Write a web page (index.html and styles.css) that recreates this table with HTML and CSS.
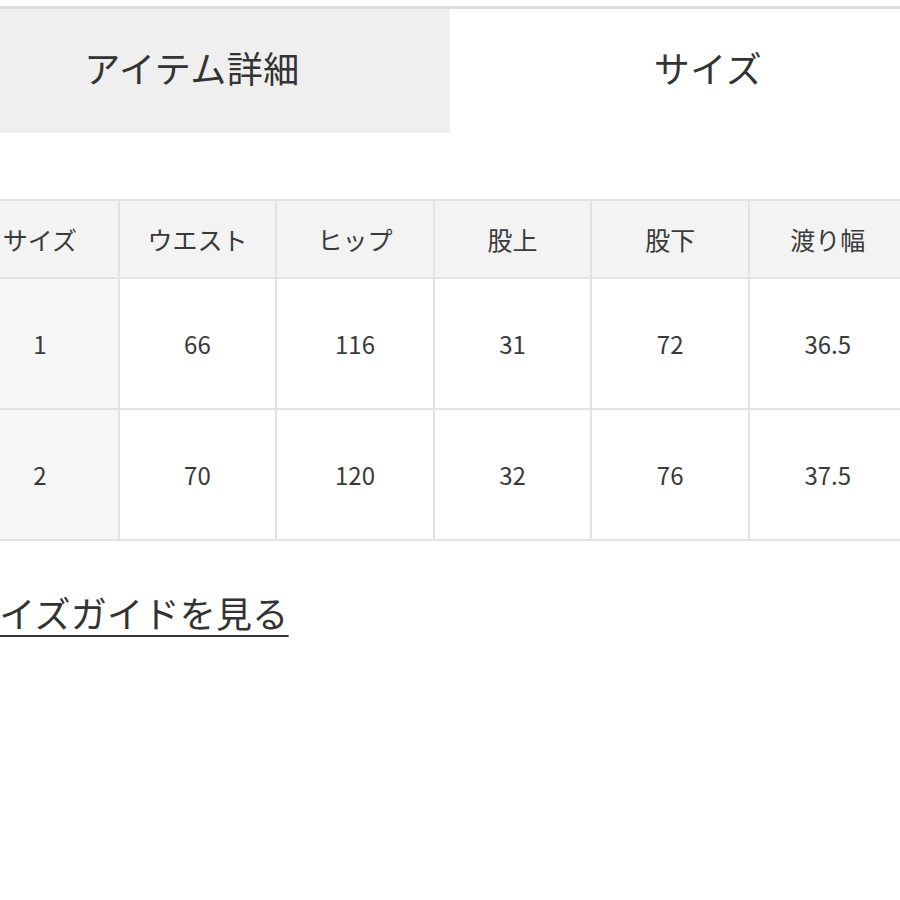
FILE: index.html
```html
<!DOCTYPE html>
<html lang="ja">
<head>
<meta charset="utf-8">
<link rel="stylesheet" href="styles.css">
</head>
<body>
<div class="page">
  <div class="topline"></div>
  <div class="tabs">
    <div class="tab tab-inactive">アイテム詳細</div>
    <div class="tab tab-active">サイズ</div>
  </div>
  <table class="size-table">
    <colgroup>
      <col><col><col><col><col><col>
    </colgroup>
    <thead>
      <tr>
        <th>サイズ</th><th>ウエスト</th><th>ヒップ</th><th>股上</th><th>股下</th><th>渡り幅</th>
      </tr>
    </thead>
    <tbody>
      <tr>
        <td class="first">1</td><td>66</td><td>116</td><td>31</td><td>72</td><td>36.5</td>
      </tr>
      <tr>
        <td class="first">2</td><td>70</td><td>120</td><td>32</td><td>76</td><td>37.5</td>
      </tr>
    </tbody>
  </table>
  <p class="guide"><a class="guide-link" href="#">サイズガイドを見る</a></p>
</div>
</body>
</html>
```
FILE: styles.css
```css
html, body {
  margin: 0;
  padding: 0;
  background: #ffffff;
}
body {
  width: 900px;
  height: 900px;
  overflow: hidden;
  font-family: "Noto Sans CJK JP", "Noto Sans", sans-serif;
  color: #333333;
}
.page {
  padding-top: 6px;
}
.topline {
  height: 3px;
  background: #dcdcdc;
}
.tabs {
  display: flex;
  margin-left: -66px;
}
.tab {
  flex: 0 0 516px;
  height: 116px;
  padding-bottom: 8px;
  display: flex;
  align-items: center;
  justify-content: center;
  font-size: 36px;
  letter-spacing: 0.5px;
  color: #333333;
}
.tab-inactive {
  background: #efefef;
}
.tab-active {
  background: #ffffff;
}
.size-table {
  margin-top: 66px;
  margin-left: -40px;
  border-collapse: collapse;
  table-layout: fixed;
  width: 946px;
}
.size-table col {
  width: 157.6px;
}
.size-table th,
.size-table td {
  border: 2px solid #e2e2e2;
  text-align: center;
  padding: 0;
  color: #3a3a3a;
}
.size-table th {
  height: 76px;
  background: #f3f3f3;
  font-weight: normal;
  font-size: 25px;
}
.size-table td {
  height: 129px;
  font-size: 24px;
  background: #ffffff;
}
.size-table td.first {
  background: #f6f6f6;
}
.guide {
  margin: 48px 0 0 -37px;
  font-size: 36px;
  line-height: 47px;
}
.guide-link {
  color: #333333;
  text-decoration: underline;
  text-decoration-thickness: 2px;
  text-underline-offset: 7px;
  letter-spacing: 0.3px;
}
```
